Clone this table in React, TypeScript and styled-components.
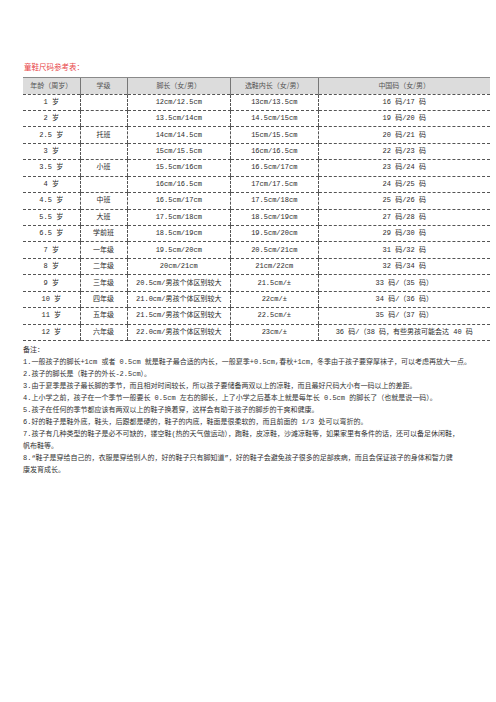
import styled, { createGlobalStyle } from 'styled-components';

const GlobalStyle = createGlobalStyle`
  body {
    margin: 0;
    background: #ffffff;
    font-family: 'Liberation Mono', 'Noto Sans CJK SC', monospace;
  }
`;

const Page = styled.div`
  padding: 61px 6px 40px 23px;
  color: #333;
`;

const Title = styled.div`
  color: #e8474a;
  font-family: 'Noto Sans CJK SC', sans-serif;
  font-size: 7.5px;
  line-height: 12px;
  height: 12px;
  padding-left: 1px;
  margin-bottom: 4px;
`;

const Table = styled.table`
  width: 467px;
  border-collapse: collapse;
  table-layout: fixed;
  font-size: 7px;
  line-height: 1;
`;

const Th = styled.th`
  background: #dcdcdc;
  color: #555;
  font-weight: normal;
  font-family: 'Noto Sans CJK SC', sans-serif;
  height: 15.5px;
  padding: 0;
  text-align: center;
  border-top: 1px solid #8a8a8a;
  border-bottom: 1px dashed #555;
  & + & {
    border-left: 1px solid #777;
  }
`;

const Td = styled.td`
  height: 15.45px;
  padding: 0;
  text-align: center;
  white-space: nowrap;
  color: #2a2a2a;
  border-bottom: 1px dashed #555;
  & + & {
    border-left: 1px dashed #555;
  }
`;

const Notes = styled.div`
  font-size: 7px;
  line-height: 12px;
  color: #333;
  padding-top: 3px;
`;

const NoteLine = styled.div`
  white-space: nowrap;
`;

type row = [string, string, string, string, string];

const rows: row[] = [
  ['1 岁', '', '12cm/12.5cm', '13cm/13.5cm', '16 码/17 码'],
  ['2 岁', '', '13.5cm/14cm', '14.5cm/15cm', '19 码/20 码'],
  ['2.5 岁', '托班', '14cm/14.5cm', '15cm/15.5cm', '20 码/21 码'],
  ['3 岁', '', '15cm/15.5cm', '16cm/16.5cm', '22 码/23 码'],
  ['3.5 岁', '小班', '15.5cm/16cm', '16.5cm/17cm', '23 码/24 码'],
  ['4 岁', '', '16cm/16.5cm', '17cm/17.5cm', '24 码/25 码'],
  ['4.5 岁', '中班', '16.5cm/17cm', '17.5cm/18cm', '25 码/26 码'],
  ['5.5 岁', '大班', '17.5cm/18cm', '18.5cm/19cm', '27 码/28 码'],
  ['6.5 岁', '学前班', '18.5cm/19cm', '19.5cm/20cm', '29 码/30 码'],
  ['7 岁', '一年级', '19.5cm/20cm', '20.5cm/21cm', '31 码/32 码'],
  ['8 岁', '二年级', '20cm/21cm', '21cm/22cm', '32 码/34 码'],
  ['9 岁', '三年级', '20.5cm/男孩个体区别较大', '21.5cm/±', '33 码/（35 码）'],
  ['10 岁', '四年级', '21.0cm/男孩个体区别较大', '22cm/±', '34 码/（36 码）'],
  ['11 岁', '五年级', '21.5cm/男孩个体区别较大', '22.5cm/±', '35 码/（37 码）'],
  ['12 岁', '六年级', '22.0cm/男孩个体区别较大', '23cm/±', '36 码/（38 码，有些男孩可能会达 40 码'],
];

const notes: string[] = [
  '备注：',
  '1.一般孩子的脚长+1cm 或者 0.5cm 就是鞋子最合适的内长，一般夏季+0.5cm,春秋+1cm，冬季由于孩子要穿厚袜子，可以考虑再放大一点。',
  '2.孩子的脚长是（鞋子的外长-2.5cm）。',
  '3.由于夏季是孩子最长脚的季节，而且相对时间较长，所以孩子要储备两双以上的凉鞋，而且最好尺码大小有一码以上的差距。',
  '4.上小学之前，孩子在一个季节一般要长 0.5cm 左右的脚长，上了小学之后基本上就是每年长 0.5cm 的脚长了（也就是说一码）。',
  '5.孩子在任何的季节都应该有两双以上的鞋子换着穿，这样会有助于孩子的脚步的干爽和健康。',
  '6.好的鞋子是鞋外底，鞋头，后跟都是硬的，鞋子的内底，鞋面是很柔软的，而且前面的 1/3 处可以弯折的。',
  '7.孩子有几种类型的鞋子是必不可缺的，镂空鞋(热的天气做运动），跑鞋，皮凉鞋，沙滩凉鞋等，如果家里有条件的话，还可以备足休闲鞋，',
  '帆布鞋等。',
  '8.“鞋子是穿给自己的，衣服是穿给别人的，好的鞋子只有脚知道”，好的鞋子会避免孩子很多的足部疾病，而且会保证孩子的身体和智力健',
  '康发育成长。',
];

export default function App() {
  return (
    <>
      <GlobalStyle />
      <Page>
        <Title>童鞋尺码参考表：</Title>
        <Table>
          <colgroup>
            <col style={{ width: 57 }} />
            <col style={{ width: 47 }} />
            <col style={{ width: 103.5 }} />
            <col style={{ width: 87.5 }} />
            <col />
          </colgroup>
          <thead>
            <tr>
              <Th>年龄（周岁）</Th>
              <Th>学级</Th>
              <Th>脚长（女/男）</Th>
              <Th>选鞋内长（女/男）</Th>
              <Th>中国码（女/男）</Th>
            </tr>
          </thead>
          <tbody>
            {rows.map((r, i) => (
              <tr key={i}>
                {r.map((c, j) => (
                  <Td key={j}>{c}</Td>
                ))}
              </tr>
            ))}
          </tbody>
        </Table>
        <Notes>
          {notes.map((n, i) => (
            <NoteLine key={i}>{n}</NoteLine>
          ))}
        </Notes>
      </Page>
    </>
  );
}
